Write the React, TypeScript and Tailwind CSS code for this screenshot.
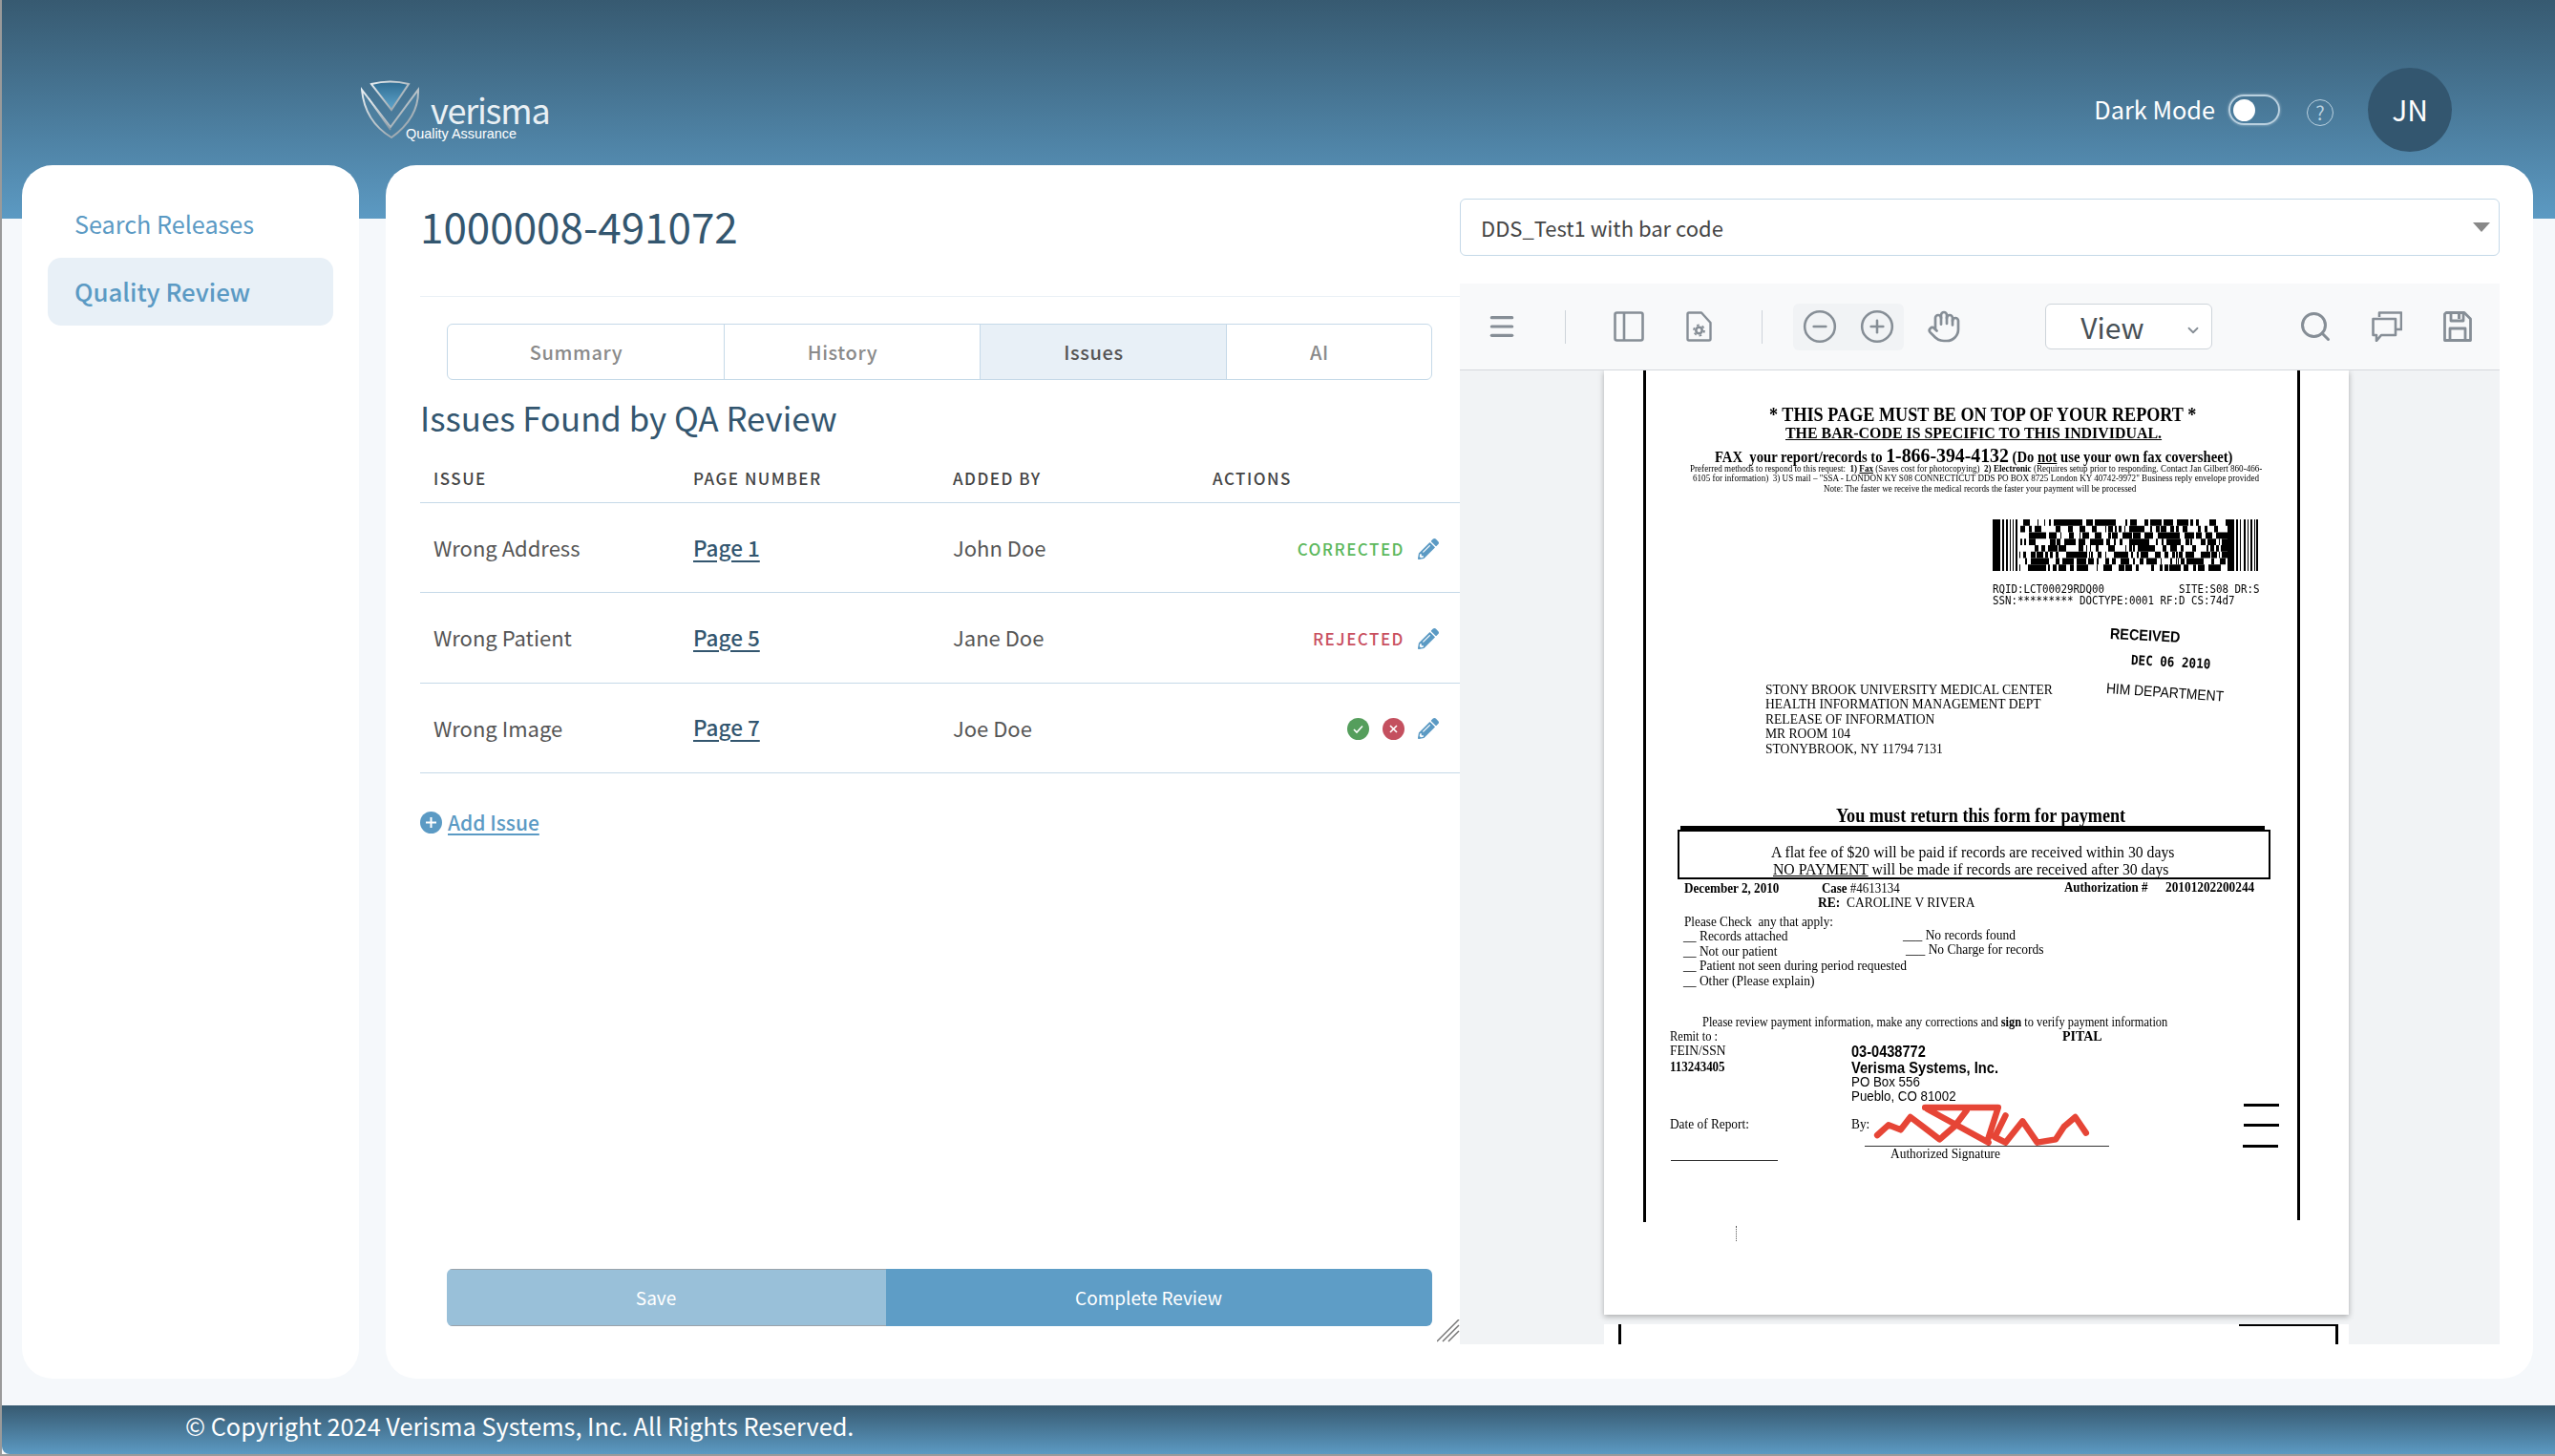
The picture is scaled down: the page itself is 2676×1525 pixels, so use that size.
import { FaPencilAlt } from "react-icons/fa";
import { ChevronDown, CircleMinus, CirclePlus, Hand, Menu, Search } from "lucide-react";
import type { ReactNode } from "react";

const issues = [
	{ issue: "Wrong Address", page: "Page 1", by: "John Doe", status: "CORRECTED" },
	{ issue: "Wrong Patient", page: "Page 5", by: "Jane Doe", status: "REJECTED" },
	{ issue: "Wrong Image", page: "Page 7", by: "Joe Doe", status: "" },
];

// fake PDF417 body, seeded so every run draws the same bars
const makeBarcode = () => {
	const rects: { x: number; y: number; w: number; h: number }[] = [];
	let seed = 417;
	const next = () => {
		seed = (seed * 1103 + 12345) % 65536;
		return seed / 65536;
	};
	for (let row = 0; row < 8; row++) {
		let x = 28;
		while (x < 246) {
			const w = 1 + Math.floor(next() * 4);
			if (next() > 0.42) rects.push({ x, y: row * 6.75, w: Math.min(w, 246 - x), h: 6.75 });
			x += w;
		}
	}
	return rects;
};
const barcodeCells = makeBarcode();
const barcodeEdges = [
	[0, 8], [10, 2], [14, 2], [18, 1], [21, 1], [24, 2],
	[246, 7], [255, 2], [259, 1], [263, 2], [267, 1], [270, 2], [274, 1], [276, 2],
];

const Logo = () => (
	<div className="flex items-start mt-[12px]">
		<svg width="62" height="62" viewBox="0 0 62 62" fill="none" className="shrink-0">
			<defs>
				<linearGradient id="shield" x1="0" y1="0" x2="1" y2="1">
					<stop offset="0" stopColor="#e8eef2" />
					<stop offset="1" stopColor="#8a979f" />
				</linearGradient>
				<linearGradient id="shieldBlue" x1="0" y1="0" x2="0" y2="1">
					<stop offset="0" stopColor="#2f6c92" />
					<stop offset="1" stopColor="#5fa5cc" />
				</linearGradient>
			</defs>
			<path d="M11 5 Q31 0 50 5 L32 32 Z" fill="url(#shieldBlue)" stroke="url(#shield)" strokeWidth="2" />
			<path d="M1 11 L31 50 L60 11 Q61 40 32 61 Q4 44 1 11 Z" fill="#4d7f9f" stroke="url(#shield)" strokeWidth="2" />
			<path d="M8 20 L31 53" stroke="url(#shield)" strokeWidth="1.5" />
		</svg>
		<div className="relative ml-[11px] mt-[16px] w-[130px]">
			<span className="block font-['Noto_Sans_CJK_JP'] text-[36px] leading-[30px] tracking-[-1.2px] text-[#e9f0f4]">
				verisma
			</span>
			<span className="absolute left-[-26px] top-[34px] whitespace-nowrap font-['Liberation_Sans'] text-[14.4px] leading-none text-white">
				Quality Assurance
			</span>
		</div>
	</div>
);

const CommentIcon = () => (
	<svg width="32" height="32" viewBox="0 0 32 32" fill="none" stroke="#868e96" strokeWidth="2.6" strokeLinejoin="round">
		<path d="M8 6 V1.5 H31 V19 H25" />
		<path d="M1.5 8 H25 V25 H10 L5 31 V25 H1.5 Z" />
	</svg>
);

const SaveIcon = () => (
	<svg width="30" height="32" viewBox="0 0 30 32" fill="none" stroke="#868e96" strokeWidth="2.8" strokeLinejoin="round">
		<path d="M3 1.5 H22 L28.5 8 V30.5 H1.5 V3 Z" />
		<path d="M8 2 V10 H21 V2" />
		<path d="M7 30 V18 H23 V30" />
		<path d="M15 3 H18 V8 H15 Z" fill="#868e96" stroke="none" />
	</svg>
);

const PanelIcon = () => (
	<svg width="32" height="32" viewBox="0 0 32 32" fill="none" stroke="#868e96" strokeWidth="2.6" strokeLinejoin="round">
		<rect x="1.5" y="1.5" width="29" height="29" rx="2" />
		<path d="M11 2 V30" />
	</svg>
);

const DocSettingsIcon = () => (
	<svg width="27" height="32" viewBox="0 0 27 32" fill="none" stroke="#868e96" strokeWidth="2.4" strokeLinejoin="round">
		<path d="M3 1.5 H16 L25.5 12 V29 Q25.5 30.5 24 30.5 H3 Q1.5 30.5 1.5 29 V3 Q1.5 1.5 3 1.5 Z" />
		<circle cx="13.5" cy="20" r="3.2" strokeWidth="2.6" />
		<circle cx="13.5" cy="20" r="5.4" strokeWidth="2" strokeDasharray="2.6 3" />
	</svg>
);

const PencilBtn = () => <FaPencilAlt className="text-[#5b9ac4] w-[22px] h-[22px] mt-[2px] shrink-0" />;

const Toolbar = () => (
	<div className="flex items-center h-[91px] bg-[#f8f9fa] border-b border-[#d5d8dc] pl-[31px] shrink-0">
		<Menu size={32} strokeWidth={2.4} color="#868e96" className="-mx-[3px]" />
		<div className="ml-[53px] w-px h-[35px] bg-[#ced4da]" />
		<div className="ml-[50px]">
			<PanelIcon />
		</div>
		<div className="ml-[44px]">
			<DocSettingsIcon />
		</div>
		<div className="ml-[52px] w-px h-[35px] bg-[#ced4da]" />
		<div className="ml-[32px] w-[116px] h-[49px] rounded-md bg-[#f1f3f5] flex items-center justify-center gap-[22px]">
			<CircleMinus size={38} strokeWidth={1.6} color="#868e96" />
			<CirclePlus size={38} strokeWidth={1.6} color="#868e96" />
		</div>
		<Hand size={36} strokeWidth={1.8} color="#868e96" className="ml-[24px]" />
		<div className="ml-[88px] w-[175px] h-[48px] rounded-md border border-[#ced4da] bg-white relative flex items-center justify-center pr-[34px]">
			<span className="text-[30px] leading-none text-[#485056]">View</span>
			<ChevronDown size={18} strokeWidth={2.4} color="#868e96" className="absolute right-[10px] top-[18px]" />
		</div>
		<Search size={36} strokeWidth={2} color="#868e96" className="ml-[90px]" />
		<div className="ml-[41px]">
			<CommentIcon />
		</div>
		<div className="ml-[43px]">
			<SaveIcon />
		</div>
	</div>
);

const families = {
	serif: "font-['Liberation_Serif']",
	sans: "font-['Liberation_Sans']",
	mono: "font-['DejaVu_Sans_Mono']",
};

const Doc = ({ className, children, family = "serif" }: { className: string; children: ReactNode; family?: keyof typeof families }) => (
	<div className={`absolute whitespace-nowrap leading-none origin-left scale-x-90 text-black ${families[family]} ${className}`}>
		{children}
	</div>
);

// first page of the scanned form, placed by hand because it is a scan
const ScannedPage = () => (
	<div className="relative ml-[151px] w-[780px] h-[989px] shrink-0 bg-white shadow-[0_2px_6px_rgba(0,0,0,0.3)] overflow-hidden">
		<div className="absolute -left-[1px] top-0 right-0 bottom-0 blur-[0.35px]">
			<div className="absolute left-[42px] top-0 w-[3px] h-[892px] bg-black" />
			<div className="absolute left-[727px] top-0 w-[3px] h-[890px] bg-black" />

			<Doc className="left-[174px] top-[36px] text-[20.2px] font-bold">* THIS PAGE MUST BE ON TOP OF YOUR REPORT *</Doc>
			<Doc className="left-[191px] top-[57px] text-[17.7px] font-bold underline">THE BAR-CODE IS SPECIFIC TO THIS INDIVIDUAL.</Doc>
			<Doc className="left-[117px] top-[78px] text-[16.3px] font-bold">
				FAX&nbsp; your report/records to <span className="text-[22px]">1-866-394-4132</span> (Do <u>not</u> use your own fax coversheet)
			</Doc>
			<Doc className="left-[91px] top-[98px] text-[10.1px]">
				Preferred methods to respond to this request:&nbsp; <b>1) <u>Fax</u></b> (Saves cost for photocopying)&nbsp; <b>2) Electronic</b> (Requires setup prior to responding. Contact Jan Gilbert 860-466-
			</Doc>
			<Doc className="left-[94px] top-[108px] text-[10.1px]">
				6105 for information)&nbsp; 3) US mail – "SSA - LONDON KY S08 CONNECTICUT DDS PO BOX 8725 London KY 40742-9972" Business reply envelope provided
			</Doc>
			<Doc className="left-[231px] top-[119px] text-[10.1px]">
				Note: The faster we receive the medical records the faster your payment will be processed
			</Doc>

			<svg className="absolute left-[408px] top-[156px]" width="278" height="54" viewBox="0 0 278 54" fill="#000">
				{barcodeEdges.map(([x, w]) => (
					<rect key={x} x={x} y={0} width={w} height={54} />
				))}
				{barcodeCells.map((c, i) => (
					<rect key={i} x={c.x} y={c.y} width={c.w} height={c.h} />
				))}
			</svg>
			<Doc family="mono" className="left-[408px] top-[223px] text-[12px]">RQID:LCT00029RDQ00</Doc>
			<Doc family="mono" className="left-[603px] top-[223px] text-[12px]">SITE:S08 DR:S</Doc>
			<Doc family="mono" className="left-[408px] top-[235px] text-[12px]">SSN:********* DOCTYPE:0001 RF:D CS:74d7</Doc>
			<Doc family="sans" className="left-[531px] top-[268px] text-[16px] font-bold rotate-[3deg]">RECEIVED</Doc>
			<Doc family="mono" className="left-[553px] top-[296px] text-[14px] font-bold rotate-[3deg]">DEC 06 2010</Doc>
			<Doc family="sans" className="left-[527px] top-[325px] text-[15.4px] rotate-[4deg]">HIM DEPARTMENT</Doc>

			<Doc className="left-[170px] top-[327px] text-[15.1px]">STONY BROOK UNIVERSITY MEDICAL CENTER</Doc>
			<Doc className="left-[170px] top-[342px] text-[15.1px]">HEALTH INFORMATION MANAGEMENT DEPT</Doc>
			<Doc className="left-[170px] top-[358px] text-[15.1px]">RELEASE OF INFORMATION</Doc>
			<Doc className="left-[170px] top-[373px] text-[15.1px]">MR ROOM 104</Doc>
			<Doc className="left-[170px] top-[389px] text-[15.1px]">STONYBROOK, NY 11794 7131</Doc>

			<Doc className="left-[244px] top-[456px] text-[20.2px] font-bold">You must return this form for payment</Doc>
			<div className="absolute left-[81px] top-[477px] w-[612px] h-[5px] bg-black" />
			<div className="absolute left-[78px] top-[481px] w-[621px] h-[52px] border-2 border-black" />
			<Doc className="left-[176px] top-[496px] text-[17.5px]">A flat fee of $20 will be paid if records are received within 30 days</Doc>
			<Doc className="left-[178px] top-[514px] text-[17.5px]"><u>NO PAYMENT</u> will be made if records are received after 30 days</Doc>

			<Doc className="left-[85px] top-[535px] text-[14.6px] font-bold">December 2, 2010</Doc>
			<Doc className="left-[229px] top-[535px] text-[14.4px]"><b>Case</b> #4613134</Doc>
			<Doc className="left-[483px] top-[534px] text-[14.4px] font-bold">Authorization #</Doc>
			<Doc className="left-[589px] top-[534px] text-[14.8px] font-bold">20101202200244</Doc>
			<Doc className="left-[225px] top-[550px] text-[15px]"><b>RE:</b>&nbsp; CAROLINE V RIVERA</Doc>

			<Doc className="left-[85px] top-[570px] text-[14.7px]">Please Check&nbsp; any that apply:</Doc>
			<Doc className="left-[84px] top-[585px] text-[15px]">__ Records attached</Doc>
			<Doc className="left-[84px] top-[601px] text-[15px]">__ Not our patient</Doc>
			<Doc className="left-[84px] top-[616px] text-[15px]">__ Patient not seen during period requested</Doc>
			<Doc className="left-[84px] top-[632px] text-[15px]">__ Other (Please explain)</Doc>
			<Doc className="left-[314px] top-[584px] text-[15px]">___ No records found</Doc>
			<Doc className="left-[317px] top-[599px] text-[15px]">___ No Charge for records</Doc>

			<Doc className="left-[104px] top-[676px] text-[13.8px]">
				Please review payment information, make any corrections and <b>sign</b> to verify payment information
			</Doc>
			<Doc className="left-[70px] top-[691px] text-[13.9px]">Remit to :</Doc>
			<Doc className="left-[481px] top-[689px] text-[15.5px] font-bold">PITAL</Doc>
			<Doc className="left-[70px] top-[705px] text-[15px]">FEIN/SSN</Doc>
			<Doc className="left-[70px] top-[722px] text-[14.4px] font-bold">113243405</Doc>
			<Doc family="sans" className="left-[260px] top-[705px] text-[16.2px] font-bold">03-0438772</Doc>
			<Doc family="sans" className="left-[260px] top-[722px] text-[16.3px] font-bold">Verisma Systems, Inc.</Doc>
			<Doc family="sans" className="left-[260px] top-[738px] text-[14.8px]">PO Box 556</Doc>
			<Doc family="sans" className="left-[260px] top-[753px] text-[14.8px]">Pueblo, CO 81002</Doc>
			<Doc className="left-[70px] top-[782px] text-[14.8px]">Date of Report:</Doc>
			<Doc className="left-[260px] top-[782px] text-[14.8px]">By:</Doc>

			<div className="absolute left-[274px] top-[812px] w-[256px] h-px bg-[#333]" />
			<Doc className="left-[301px] top-[813px] text-[14.9px]">Authorized Signature</Doc>
			<div className="absolute left-[71px] top-[827px] w-[112px] h-px bg-[#333]" />
			<svg className="absolute left-[281px] top-[767px]" width="235" height="50" viewBox="550 1010 460 150" preserveAspectRatio="none" fill="none" stroke="#e64536" strokeLinecap="round" strokeLinejoin="round">
				<path vectorEffect="non-scaling-stroke" strokeWidth="6.5" d="M562 1112 L585 1080 L610 1095 L630 1055 L660 1090 L690 1125 L720 1085 L745 1035 M660 1025 H810 L788 1130 M665 1030 L790 1135 M825 1050 L803 1118 L825 1135 L860 1068 L890 1135 L928 1125 L945 1085 L968 1055 L990 1105" />
			</svg>
			<div className="absolute left-[671px] top-[768px] w-[37px] h-[3px] bg-black" />
			<div className="absolute left-[671px] top-[789px] w-[37px] h-[3px] bg-black" />
			<div className="absolute left-[670px] top-[811px] w-[37px] h-[3px] bg-black" />
			<div className="absolute left-[139px] top-[896px] h-[16px] border-l border-dotted border-[#555]" />
		</div>
	</div>
);

export default function App() {
	return (
		<div className="w-[2676px] h-[1525px] bg-[#9a9a9a] pl-[2px] pb-[2px] font-['Noto_Sans_CJK_JP',sans-serif] overflow-hidden">
			<div className="h-full flex flex-col bg-[#f5f8fb]">
				<header className="h-[229px] shrink-0 bg-gradient-to-b from-[#375a71] to-[#5c9ac3] flex justify-between items-start pl-[376px] pr-[108px] pt-[71px]">
					<Logo />
					<div className="flex items-center">
						<span className="text-[25.3px] leading-none text-white">Dark Mode</span>
						<div className="ml-[14px] w-[54px] h-[32px] rounded-full border-2 border-[#b9d0df] shadow-[0_0_3px_rgba(255,255,255,0.5)] flex items-center pl-[3px]">
							<div className="w-[23px] h-[23px] rounded-full bg-white" />
						</div>
						<div className="ml-[28px] mt-[6px] w-[28px] h-[28px] rounded-full border border-[#b9d0df] flex items-center justify-center text-[20px] leading-none text-[#b9d0df]">
							?
						</div>
						<div className="ml-[36px] w-[88px] h-[88px] rounded-full bg-[#33566f] flex items-center justify-center text-[30px] pb-[2px] leading-none text-white">
							JN
						</div>
					</div>
				</header>

				<main className="flex-1 min-h-0 flex -mt-[56px] pl-[21px] pr-[23px] pb-[28px] gap-[28px]">
					<aside className="w-[353px] shrink-0 bg-white rounded-[32px] pt-[36px] px-[27px]">
						<div className="h-[61px] pl-[28px] pb-[10px] flex items-center text-[25.2px] leading-none text-[#5b9ac4]">
							Search Releases
						</div>
						<div className="h-[71px] pl-[28px] pb-[1px] flex items-center rounded-[14px] bg-[#e8f0f7] text-[25.8px] leading-none font-medium text-[#5b9ac4]">
							Quality Review
						</div>
					</aside>

					<section className="relative flex-1 min-w-0 bg-white rounded-[32px] flex pl-[36px] pr-[35px]">
						<div className="w-[1089px] shrink-0 flex flex-col pb-[55px]">
							<h1 className="mt-[37px] h-[52px] text-[44px] leading-[52px] text-[#33566f]">1000008-491072</h1>
							<div className="mt-[48px] h-px bg-[#eaf0f5]" />
							<div className="mt-[28px] ml-[28px] w-[1032px] h-[59px] flex border border-[#c5d9e8] rounded-md text-[20px] font-medium tracking-[0.6px] text-[#8a8a8a] overflow-hidden">
								<div className="w-[290px] pr-[20px] flex items-center justify-center border-r border-[#c5d9e8]">Summary</div>
								<div className="w-[268px] pr-[20px] flex items-center justify-center border-r border-[#c5d9e8]">History</div>
								<div className="w-[258px] pr-[20px] flex items-center justify-center border-r border-[#c5d9e8] bg-[#e8f0f7] text-[#555]">Issues</div>
								<div className="flex-1 pr-[20px] flex items-center justify-center">AI</div>
							</div>
							<h2 className="mt-[16px] text-[34.8px] leading-[46px] text-[#33566f]">Issues Found by QA Review</h2>

							<div className="mt-[27px] grid grid-cols-[272px_272px_272px_1fr] pl-[14px] pt-[2px] h-[40px] items-start border-b border-[#c5d9e8] text-[17px] leading-[24px] font-medium tracking-[1.5px] text-[#444]">
								<div>ISSUE</div>
								<div>PAGE NUMBER</div>
								<div>ADDED BY</div>
								<div>ACTIONS</div>
							</div>
							{issues.map((row) => (
								<div
									key={row.issue}
									className="h-[94.3px] grid grid-cols-[272px_272px_272px_1fr] pl-[14px] items-center border-b border-[#c5d9e8] text-[22px] leading-none text-[#555]"
								>
									<div className="pb-[1px]">{row.issue}</div>
									<div className="pb-[1px] text-[22.5px] font-medium text-[#33566f] underline underline-offset-[4px]">{row.page}</div>
									<div className="pb-[1px]">{row.by}</div>
									<div className="flex items-center justify-end pr-[22px] gap-[14px]">
										{row.status === "CORRECTED" && (
											<span className="pt-[2px] text-[17px] font-medium tracking-[1.5px] text-[#5cb85c]">CORRECTED</span>
										)}
										{row.status === "REJECTED" && (
											<span className="pt-[2px] text-[17px] font-medium tracking-[1.5px] text-[#c9505f]">REJECTED</span>
										)}
										{row.status === "" && (
											<div className="flex items-center gap-[14px] pt-[2px]">
												<svg width="23" height="23" viewBox="0 0 23 23">
													<circle cx="11.5" cy="11.5" r="11.5" fill="#559e5c" />
													<path d="M7 12 L10 15 L16 8.5" fill="none" stroke="#fff" strokeWidth="1.6" />
												</svg>
												<svg width="23" height="23" viewBox="0 0 23 23">
													<circle cx="11.5" cy="11.5" r="11.5" fill="#c4505f" />
													<path d="M8 8 L15 15 M15 8 L8 15" fill="none" stroke="#fff" strokeWidth="1.6" />
												</svg>
											</div>
										)}
										<PencilBtn />
									</div>
								</div>
							))}

							<div className="mt-[40px] flex items-center text-[21px] leading-none font-medium text-[#5b9ac4]">
								<svg width="23" height="23" viewBox="0 0 23 23" className="shrink-0">
									<circle cx="11.5" cy="11.5" r="11.5" fill="#5b9ac4" />
									<path d="M11.5 6 V17 M6 11.5 H17" stroke="#fff" strokeWidth="2" />
								</svg>
								<span className="ml-[6px] underline underline-offset-[3px]">Add Issue</span>
							</div>

							<div className="mt-auto ml-[28px] w-[1032px] h-[60px] flex rounded-md overflow-hidden text-[19px] leading-none text-white">
								<div className="w-[460px] pr-[22px] pb-[2px] bg-[#99c0d9] border-y border-[#9aa3ab] flex items-center justify-center">Save</div>
								<div className="flex-1 pr-[22px] pb-[2px] bg-[#5e9dc6] flex items-center justify-center">Complete Review</div>
							</div>
						</div>

						<div className="flex-1 min-w-0 flex flex-col pt-[35px] pb-[36px]">
							<div className="h-[60px] shrink-0 border border-[#c5d9e8] rounded-md flex items-center justify-between pl-[21px] pr-[9px] text-[22px] leading-none text-[#444]">
								<span className="pb-[1px]">DDS_Test1 with bar code</span>
								<div className="w-0 h-0 border-x-[9px] border-x-transparent border-t-[10px] border-t-[#888]" />
							</div>
							<div className="mt-[29px] flex-1 min-h-0 flex flex-col">
								<Toolbar />
								<div className="flex-1 min-h-0 bg-[#f1f3f5] overflow-hidden flex flex-col">
									<ScannedPage />
									<div className="relative mt-[10px] ml-[151px] w-[780px] h-[30px] shrink-0 bg-white">
										<div className="absolute left-[15px] top-0 w-[3px] h-full bg-black" />
										<div className="absolute left-[665px] top-0 w-[102px] h-[2px] bg-black" />
										<div className="absolute left-[766px] top-0 w-[3px] h-full bg-black" />
									</div>
								</div>
							</div>
						</div>

						<svg className="absolute left-[1101px] top-[1209px]" width="24" height="24" viewBox="0 0 24 24" stroke="#777" strokeWidth="1.5">
							<path d="M0 23 L23 0 M6 23 L23 6 M12 23 L23 12" />
						</svg>
					</section>
				</main>

				<footer className="h-[51px] shrink-0 rounded-bl-lg bg-gradient-to-b from-[#375a71] to-[#5c9ac3] pl-[192px] pb-[7px] flex items-center text-[25.3px] leading-none text-white">
					© Copyright 2024 Verisma Systems, Inc. All Rights Reserved.
				</footer>
			</div>
		</div>
	);
}
